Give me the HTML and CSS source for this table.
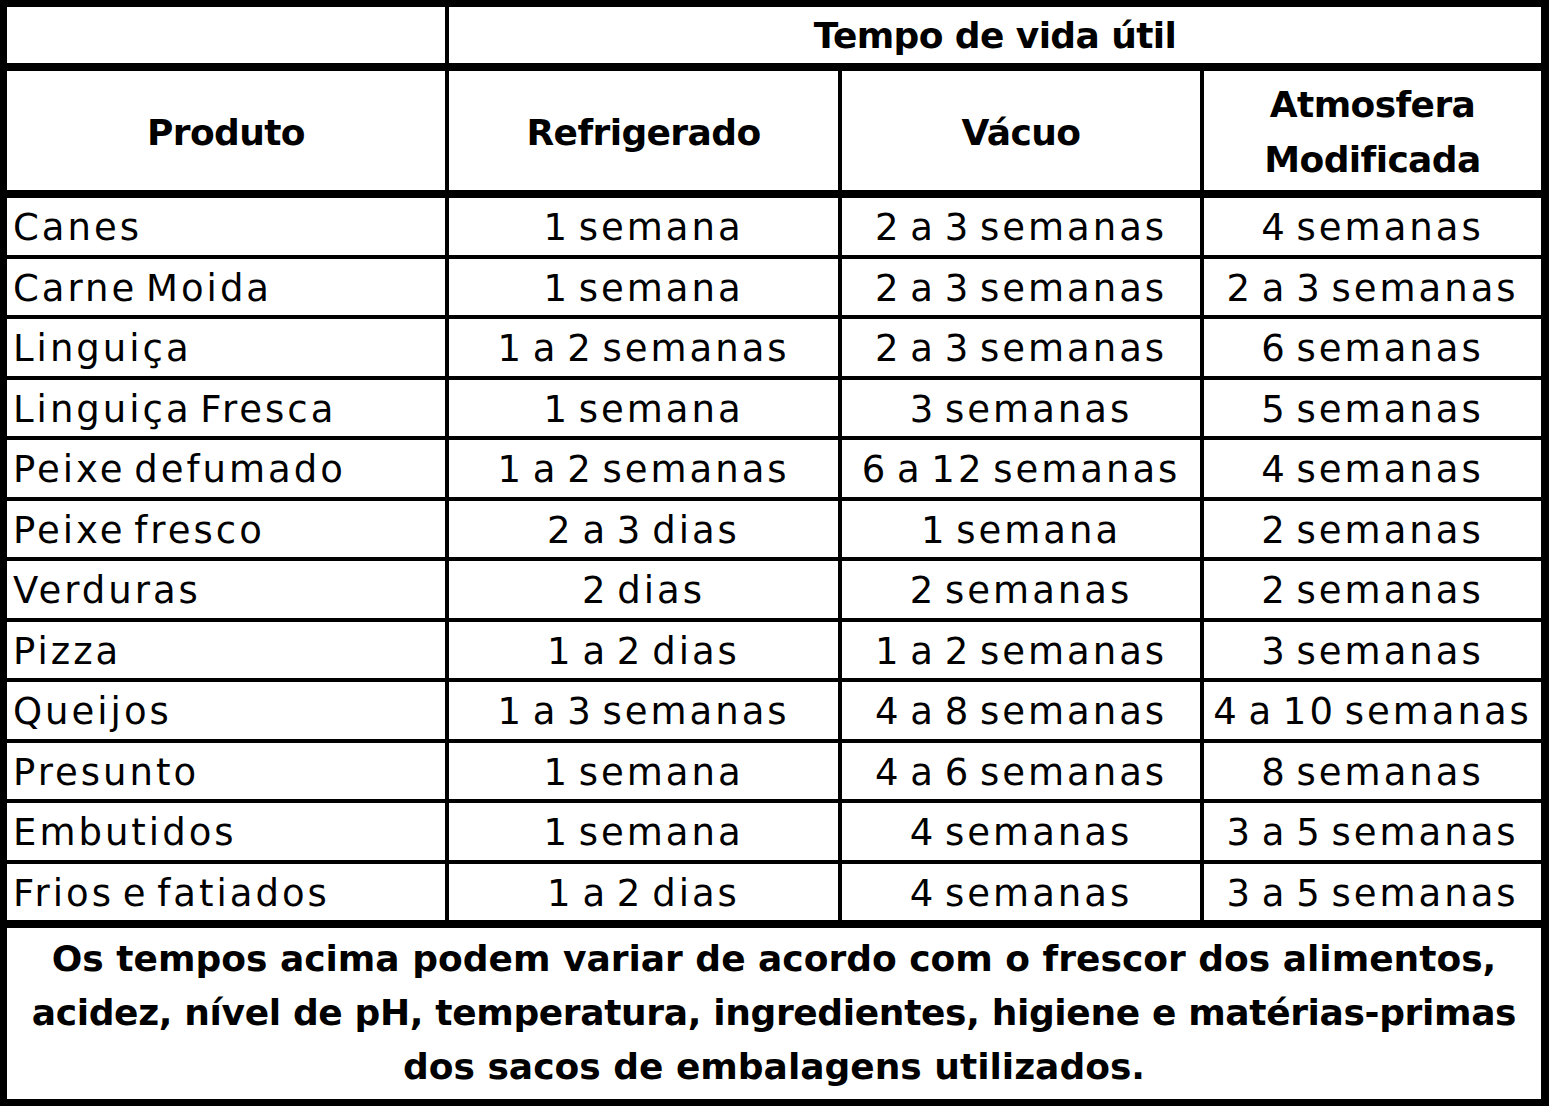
FILE: index.html
```html
<!DOCTYPE html>
<html lang="pt">
<head>
<meta charset="utf-8">
<title>Tempo de vida útil</title>
<link rel="stylesheet" href="styles.css">
</head>
<body>
<div class="sheet">
  <div class="cell hd1"></div>
  <div class="cell hd1 span3 bold">Tempo de vida útil</div>

  <div class="cell hd2 bold">Produto</div>
  <div class="cell hd2 bold">Refrigerado</div>
  <div class="cell hd2 bold">Vácuo</div>
  <div class="cell hd2 bold">Atmosfera<br>Modificada</div>

  <div class="cell name">Canes</div><div class="cell">1 semana</div><div class="cell">2 a 3 semanas</div><div class="cell">4 semanas</div>
  <div class="cell name">Carne Moida</div><div class="cell">1 semana</div><div class="cell">2 a 3 semanas</div><div class="cell">2 a 3 semanas</div>
  <div class="cell name">Linguiça</div><div class="cell">1 a 2 semanas</div><div class="cell">2 a 3 semanas</div><div class="cell">6 semanas</div>
  <div class="cell name">Linguiça Fresca</div><div class="cell">1 semana</div><div class="cell">3 semanas</div><div class="cell">5 semanas</div>
  <div class="cell name">Peixe defumado</div><div class="cell">1 a 2 semanas</div><div class="cell">6 a 12 semanas</div><div class="cell">4 semanas</div>
  <div class="cell name">Peixe fresco</div><div class="cell">2 a 3 dias</div><div class="cell">1 semana</div><div class="cell">2 semanas</div>
  <div class="cell name">Verduras</div><div class="cell">2 dias</div><div class="cell">2 semanas</div><div class="cell">2 semanas</div>
  <div class="cell name">Pizza</div><div class="cell">1 a 2 dias</div><div class="cell">1 a 2 semanas</div><div class="cell">3 semanas</div>
  <div class="cell name">Queijos</div><div class="cell">1 a 3 semanas</div><div class="cell">4 a 8 semanas</div><div class="cell">4 a 10 semanas</div>
  <div class="cell name">Presunto</div><div class="cell">1 semana</div><div class="cell">4 a 6 semanas</div><div class="cell">8 semanas</div>
  <div class="cell name">Embutidos</div><div class="cell">1 semana</div><div class="cell">4 semanas</div><div class="cell">3 a 5 semanas</div>
  <div class="cell name last">Frios e fatiados</div><div class="cell last">1 a 2 dias</div><div class="cell last">4 semanas</div><div class="cell last">3 a 5 semanas</div>

  <div class="cell foot bold">
    <span class="line">Os tempos acima podem variar de acordo com o frescor dos alimentos,</span>
    <span class="line narrow">acidez, nível de pH, temperatura, ingredientes, higiene e matérias-primas</span>
    <span class="line">dos sacos de embalagens utilizados.</span>
  </div>
</div>
</body>
</html>
```
FILE: styles.css
```css
html, body {
  margin: 0;
  padding: 0;
  background: #ffffff;
}

.sheet {
  box-sizing: border-box;
  width: 1549px;
  height: 1106px;
  background: #000;
  padding: 7px 8px 8px 7px;
  display: grid;
  grid-template-columns: 438px 389px 358px 337px;
  grid-template-rows: 60px 123px repeat(11, 56.5px) 60px 171px;
  gap: 4px;
  font-family: "DejaVu Sans", sans-serif;
  color: #000;
}

.cell {
  box-sizing: border-box;
  background: #fff;
  display: flex;
  align-items: center;
  justify-content: center;
  text-align: center;
  font-size: 37px;
  letter-spacing: 3px;
  word-spacing: -6px;
  line-height: 55px;
  white-space: nowrap;
  padding-top: 3px;
}

.bold {
  font-weight: bold;
  font-size: 36px;
  letter-spacing: -0.6px;
  word-spacing: 0;
}

.hd1, .hd2, .last {
  border-bottom: 4px solid #000;
}

.hd1 {
  padding-top: 0;
}

.span3 {
  grid-column: 2 / span 3;
}

.name {
  justify-content: flex-start;
  text-align: left;
  padding-left: 6px;
}

.foot {
  grid-column: 1 / span 4;
  flex-direction: column;
  line-height: 54px;
  padding-top: 0;
  letter-spacing: 0;
}

.line {
  display: block;
}

.narrow {
  letter-spacing: -0.35px;
}
```
